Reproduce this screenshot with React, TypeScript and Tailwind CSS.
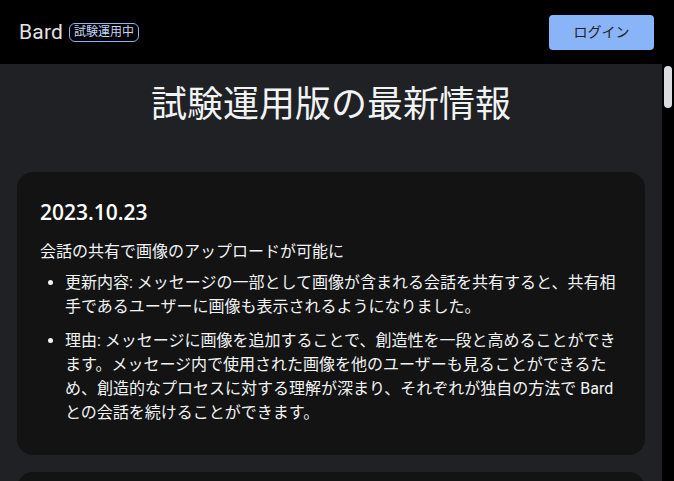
import React from "react";

const jp = { fontFamily: '"Roboto", "Noto Sans CJK JP", sans-serif' };

export default function App() {
  return (
    <div className="w-[674px] h-[481px] bg-black flex flex-col overflow-hidden" style={jp}>
      <header className="h-[64px] shrink-0 flex items-center justify-between pl-[19px] pr-[20px]">
        <div className="flex items-center gap-[6px]">
          <span className="text-[21px] leading-none text-[#e3e3e3] tracking-[0.2px]">Bard</span>
          <span className="h-[19px] px-[4px] rounded-[6px] border border-[#8ab4f8] text-[#c2d7fa] text-[12px] leading-[17px] flex items-center">
            試験運用中
          </span>
        </div>
        <button className="w-[105px] h-[35px] rounded-[4px] bg-[#8ab4f8] text-[#202124] text-[14px] leading-none flex items-center justify-center">
          ログイン
        </button>
      </header>
      <div className="flex-1 flex min-h-0">
        <main className="flex-1 bg-[#202124] px-[17px] pt-[17px] overflow-hidden">
          <h1 className="text-center text-[36px] leading-[48px] text-[#f1f3f4] font-normal mb-[43px]">
            試験運用版の最新情報
          </h1>
          <section className="rounded-[16px] bg-[#131314] pl-[23px] pr-[24px] pt-[24px] pb-[30px] text-[#f1f3f4]">
            <h2 className="text-[21px] leading-[32px] font-semibold text-white" style={{ fontFamily: '"Open Sans", "Noto Sans CJK JP", sans-serif' }}>
              2023.10.23
            </h2>
            <p className="mt-[12px] text-[16px] leading-[24px] whitespace-nowrap">会話の共有で画像のアップロードが可能に</p>
            <ul className="mt-[7px] pl-[25px] list-disc text-[16px] leading-[24px] flex flex-col gap-[10px] whitespace-nowrap">
              <li>
                更新内容: メッセージの一部として画像が含まれる会話を共有すると、共有相<br />
                手であるユーザーに画像も表示されるようになりました。
              </li>
              <li>
                理由: メッセージに画像を追加することで、創造性を一段と高めることができ<br />
                ます。メッセージ内で使用された画像を他のユーザーも見ることができるた<br />
                め、創造的なプロセスに対する理解が深まり、それぞれが独自の方法で Bard<br />
                との会話を続けることができます。
              </li>
            </ul>
          </section>
          <section className="mt-[17px] h-[120px] rounded-[16px] bg-[#131314]" />
        </main>
        <div className="w-[12px] bg-black pt-[2px] flex justify-center">
          <div className="w-[8px] h-[42px] rounded-full bg-[#dadce0]" />
        </div>
      </div>
    </div>
  );
}
